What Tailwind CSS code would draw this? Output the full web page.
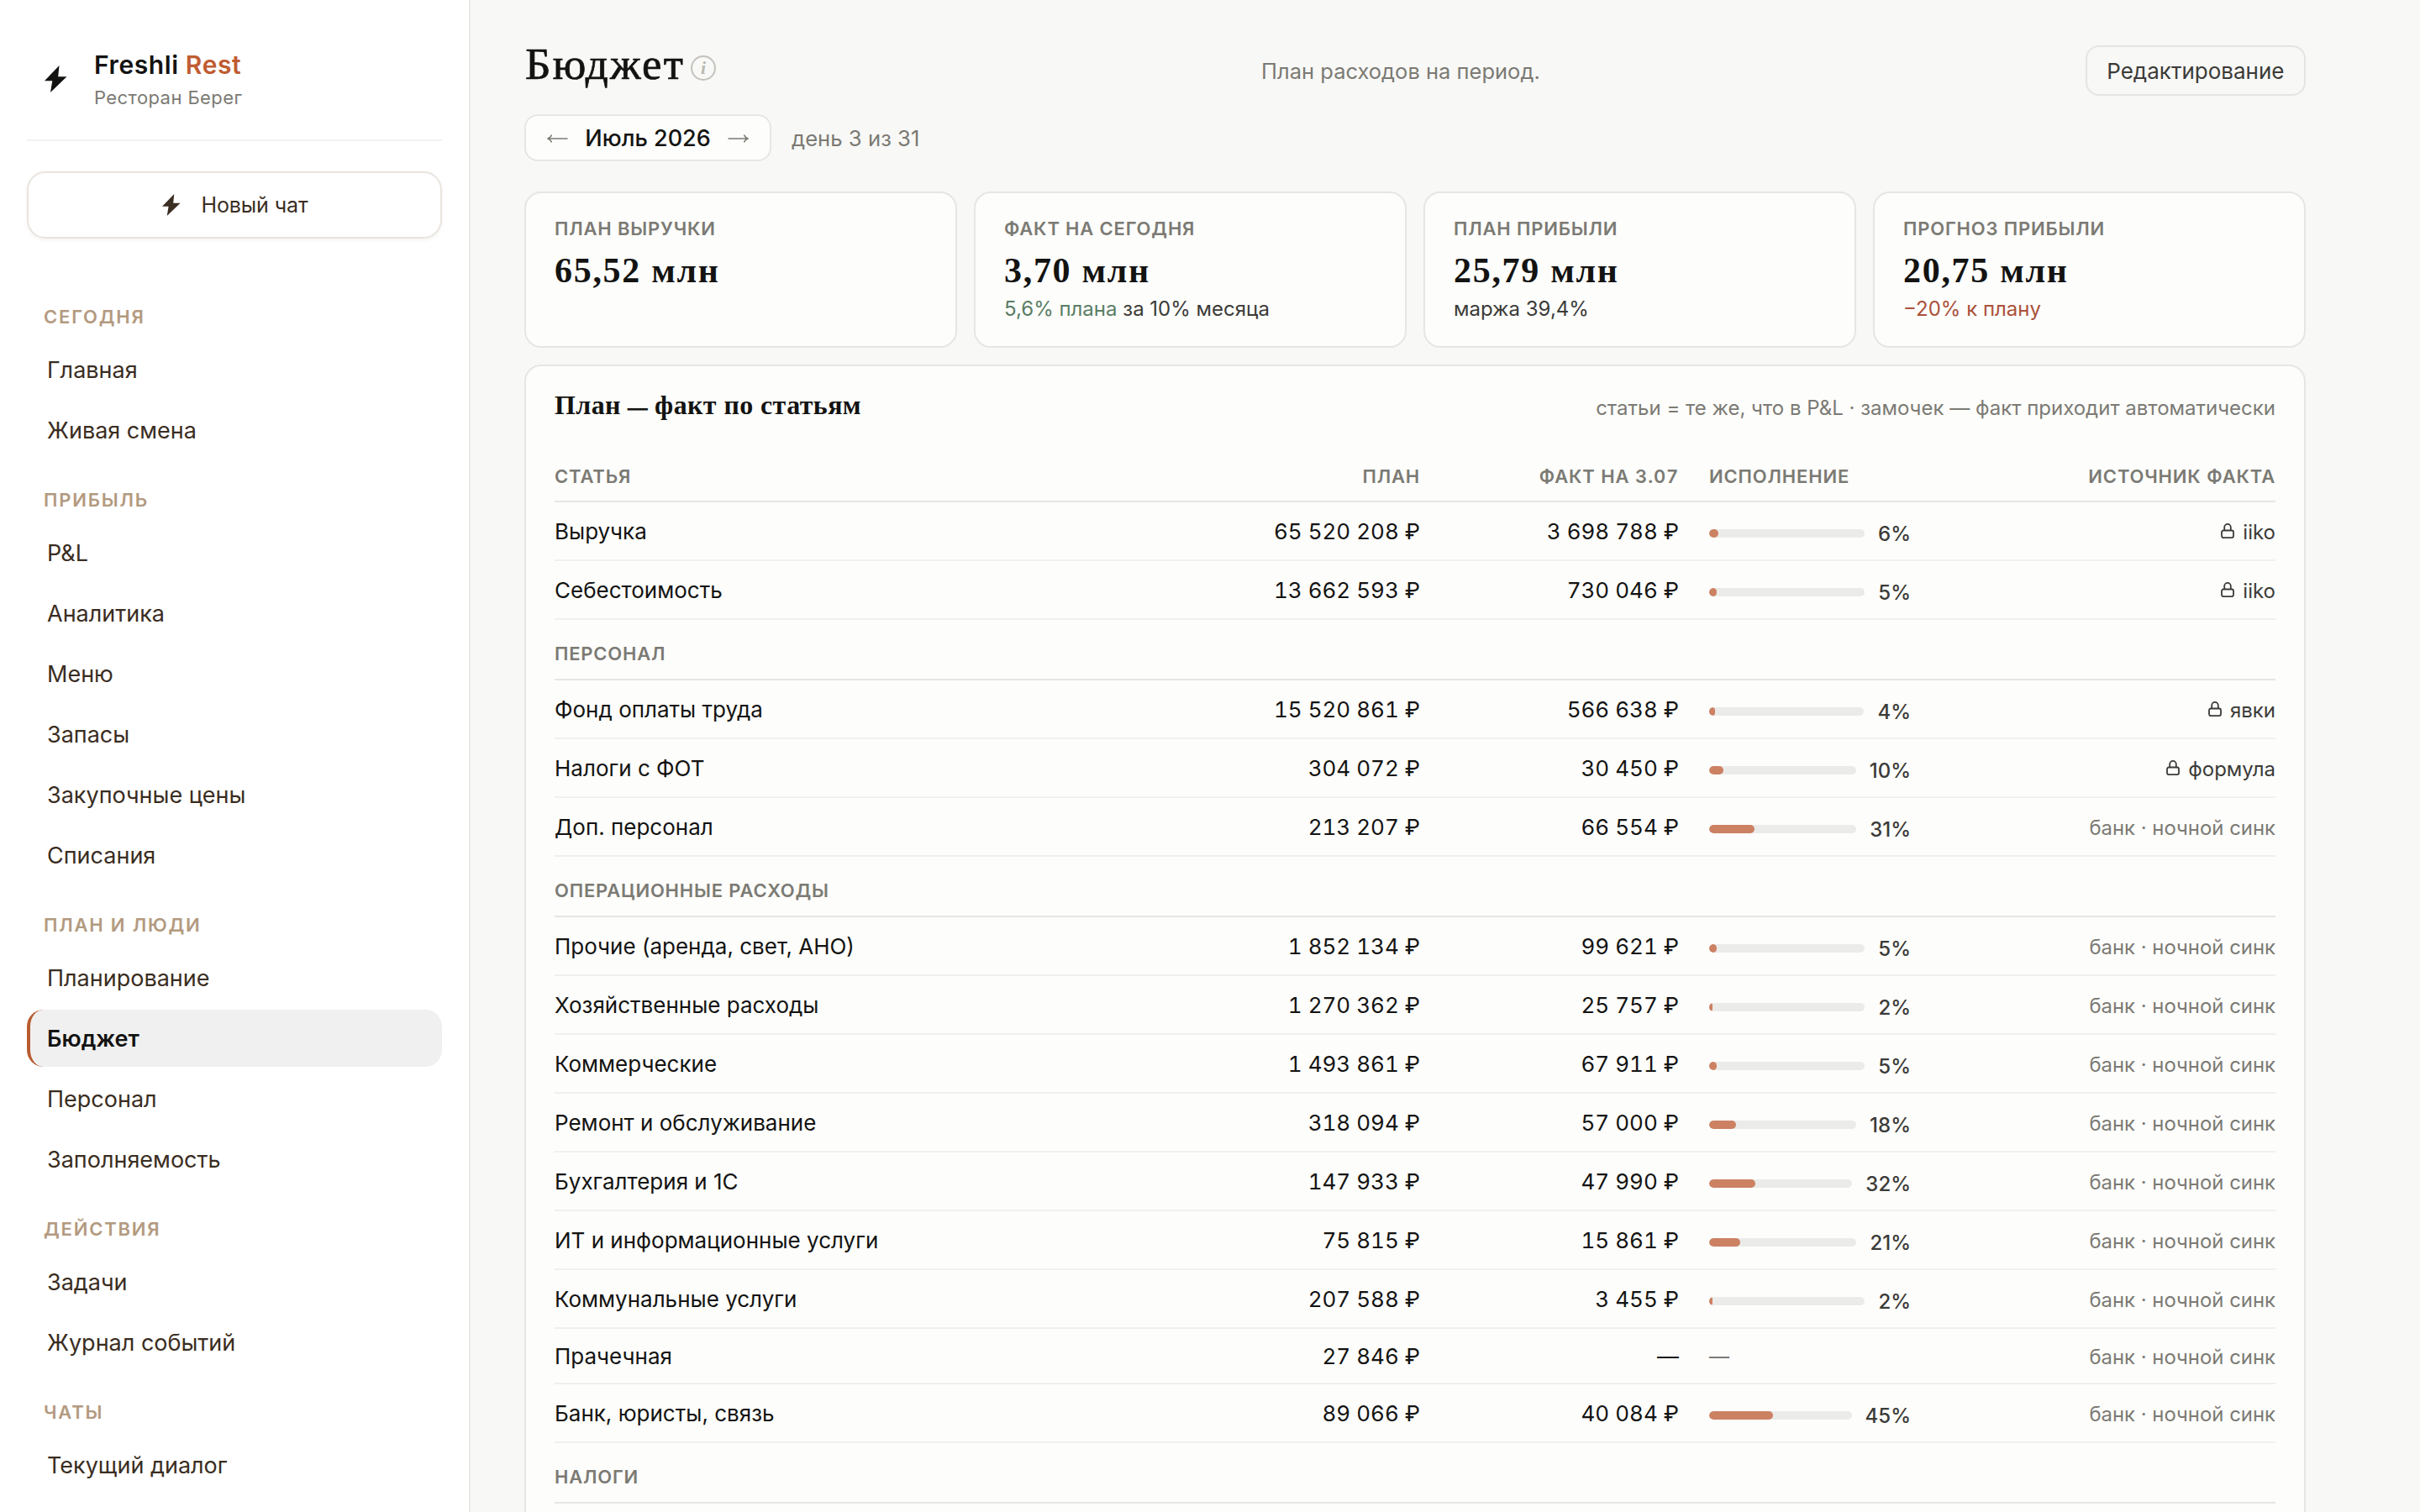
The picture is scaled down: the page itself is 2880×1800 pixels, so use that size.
<!DOCTYPE html>
<html lang="ru">
<head>
<meta charset="utf-8">
<title>Freshli Rest — Бюджет</title>
<script src="https://cdn.jsdelivr.net/npm/@tailwindcss/browser@4"></script>
</head>
<body class="bg-[#f8f8f6] font-['Inter',sans-serif] text-[#131312] antialiased">
<div class="flex h-[1800px] w-[2880px] overflow-hidden">
  <aside class="flex w-[560px] shrink-0 flex-col border-r-2 border-[#e9e9e8] bg-white px-8">
    <div class="flex h-[168px] shrink-0 items-center gap-8 border-b-2 border-[#f2f2f2] pt-[22px] pl-[21px]">
      <svg class="h-8 w-[27px]" viewBox="0 0 27 32" fill="#131312"><path d="M17.5 0 0 18.3h9.300L7 32 26.500 13.200H16.200z"/></svg>
      <div class="flex flex-col pt-[3px]">
        <div class="text-[30px] leading-[40px] font-semibold tracking-[0.6px]"><span>Freshli <span class="text-[#c05c32]">Rest</span></span></div>
        <div class="text-[22px] leading-[38px] tracking-[0.42px] text-[#7b7a74]"><span>Ресторан Берег</span></div>
      </div>
    </div>
    <button class="mt-9 flex h-20 shrink-0 items-center justify-center gap-6 rounded-[22px] border-2 border-[#e9e4de] pt-0.5 pl-0.5 text-[25px] tracking-[-0.1px] text-[#3a2d22] shadow-[0_2px_4px_rgba(60,40,20,0.05)]">
      <svg class="-mt-0.5 h-[26px] w-[22px]" viewBox="0 0 27 32" fill="#3a2d22"><path d="M17.5 0 0 18.3h9.300L7 32 26.500 13.200H16.200z"/></svg>
      <span>Новый чат</span>
    </button>
    <nav id="nav" class="mt-11 flex flex-col"></nav>
  </aside>
  <main class="flex flex-1 flex-col pt-[54px] pr-[136px] pl-16">
    <header class="flex h-[60px] shrink-0 items-center justify-between">
      <div class="flex items-center gap-[7px]">
        <h1 class="-mt-4 pl-px font-['Liberation_Serif',serif] text-[53px] leading-[60px] tracking-[2.2px] [-webkit-text-stroke:0.7px_#131312]"><span>Бюджет</span></h1>
        <span class="-mt-1.5 flex size-[30px] items-center justify-center rounded-full border-2 border-[#c3c2bc] font-['Liberation_Serif',serif] text-[22px] leading-none font-bold text-[#b9b8b1] italic">i</span>
      </div>
      <p class="mt-[3px] text-[25.5px] text-[#7b7a74]"><span>План расходов на период.</span></p>
      <button class="h-[60px] rounded-[16px] border-2 border-[#e4e4e2] px-[23.5px] pt-px text-[26px] text-[#3b3b38]"><span>Редактирование</span></button>
    </header>
    <div class="mt-[22px] flex h-14 shrink-0 items-center gap-6">
      <div class="flex h-14 w-[294px] items-center justify-between rounded-[16px] border-2 border-[#e6e6e4] bg-[#fdfdfb] px-6">
        <svg class="mt-0.5 h-4 w-[26px]" viewBox="0 0 26 16" fill="none" stroke="#7b7a74" stroke-width="1.500"><path d="M25.500 8H1.500M6.500 3.500C5.500 6 4 7.500 1.500 8 4 8.500 5.500 10 6.500 12.500"/></svg>
        <span class="mt-0.5 text-[27px] font-medium"><span>Июль 2026</span></span>
        <svg class="mt-0.5 h-4 w-[26px]" viewBox="0 0 26 16" fill="none" stroke="#7b7a74" stroke-width="1.500"><path d="M.5 8h24M19.500 3.500C20.500 6 22 7.500 24.500 8 22 8.500 20.500 10 19.500 12.500"/></svg>
      </div>
      <span class="mt-0.5 text-[25.7px] text-[#7b7a74]"><span>день 3 из 31</span></span>
    </div>
    <section id="cards" class="mt-9 grid h-[186px] shrink-0 grid-cols-4 gap-5"></section>
    <section class="mt-5 flex h-[1500px] shrink-0 flex-col rounded-[20px] border-2 border-[#e6e6e4] bg-[#fdfdfb] px-[34px]">
      <div class="flex h-[100px] items-center justify-between">
        <h2 class="-mt-1 font-['Liberation_Serif',serif] text-[32px] leading-[40px] font-bold tracking-[0.4px]"><span>План <span class="text-[23px] [-webkit-text-stroke:1px_#131312]">—</span> факт по статьям</span></h2>
        <p class="text-[24px] text-[#7b7a74]"><span>статьи = те же, что в P&amp;L · замочек — факт приходит автоматически</span></p>
      </div>
      <div class="grid h-[62px] grid-cols-[1030px_308px_36px_240px_1fr] items-center border-b-2 border-[#e6e6e4] pt-0.5 text-[22px] font-semibold tracking-[0.82px] text-[#7b7a74] tabular-nums">
        <div class="flex justify-between"><span>СТАТЬЯ</span><span>ПЛАН</span></div>
        <div class="text-right"><span>ФАКТ НА 3.07</span></div>
        <div></div>
        <div><span>ИСПОЛНЕНИЕ</span></div>
        <div class="text-right"><span>ИСТОЧНИК ФАКТА</span></div>
      </div>
      <div id="rows"></div>
    </section>
  </main>
</div>
<script>
const nav = [
  ['СЕГОДНЯ', ['Главная', 'Живая смена']],
  ['ПРИБЫЛЬ', ['P&amp;L', 'Аналитика', 'Меню', 'Запасы', 'Закупочные цены', 'Списания']],
  ['ПЛАН И ЛЮДИ', ['Планирование', 'Бюджет', 'Персонал', 'Заполняемость']],
  ['ДЕЙСТВИЯ', ['Задачи', 'Журнал событий']],
  ['ЧАТЫ', ['Текущий диалог']],
];
document.getElementById('nav').innerHTML = nav.map(([title, items]) => `
  <div class="flex h-[78px] items-center pt-5 pl-5 text-[22px] font-semibold tracking-[1.8px] text-[#b39a80]"><span>${title}</span></div>
  <div class="flex flex-col gap-1">${items.map(t => t === 'Бюджет'
    ? `<a class="flex h-[68px] items-center rounded-[20px] border-l-4 border-[#b85c30] bg-[#f0f0f0] pt-[3px] pl-5 text-[27px] font-semibold"><span>${t}</span></a>`
    : `<a class="flex h-[68px] items-center pt-[3px] pl-6 text-[27px] text-[#3a2d22]"><span>${t}</span></a>`).join('')}</div>`).join('');

const cards = [
  ['ПЛАН ВЫРУЧКИ', '65,52 млн', ''],
  ['ФАКТ НА СЕГОДНЯ', '3,70 млн', '<span class="text-[#5a7d65]">5,6% плана</span> за 10% месяца'],
  ['ПЛАН ПРИБЫЛИ', '25,79 млн', 'маржа 39,4%'],
  ['ПРОГНОЗ ПРИБЫЛИ', '20,75 млн', '<span class="text-[#ab503a]">−20% к плану</span>'],
];
document.getElementById('cards').innerHTML = cards.map(([l, v, s]) => `
  <div class="flex flex-col rounded-[20px] border-2 border-[#e6e6e4] bg-[#fdfdfb] px-[34px] pt-[28px]">
    <div class="text-[22px] leading-[28px] font-semibold tracking-[0.82px] text-[#7b7a74]"><span>${l}</span></div>
    <div class="mt-2 font-['Liberation_Serif',serif] text-[42px] leading-[56px] font-bold tracking-[1.7px]"><span>${v}</span></div>
    <div class="mt-0.5 text-[24px] leading-[32px] text-[#3b3b38]"><span>${s}</span></div>
  </div>`).join('');

const bank = 'банк · ночной синк';
const rows = [
  ['Выручка', '65 520 208', '3 698 788', 6, 'iiko'],
  ['Себестоимость', '13 662 593', '730 046', 5, 'iiko'],
  ['ПЕРСОНАЛ'],
  ['Фонд оплаты труда', '15 520 861', '566 638', 4, 'явки'],
  ['Налоги с ФОТ', '304 072', '30 450', 10, 'формула'],
  ['Доп. персонал', '213 207', '66 554', 31, bank],
  ['ОПЕРАЦИОННЫЕ РАСХОДЫ'],
  ['Прочие (аренда, свет, АНО)', '1 852 134', '99 621', 5, bank],
  ['Хозяйственные расходы', '1 270 362', '25 757', 2, bank],
  ['Коммерческие', '1 493 861', '67 911', 5, bank],
  ['Ремонт и обслуживание', '318 094', '57 000', 18, bank],
  ['Бухгалтерия и 1С', '147 933', '47 990', 32, bank],
  ['ИТ и информационные услуги', '75 815', '15 861', 21, bank],
  ['Коммунальные услуги', '207 588', '3 455', 2, bank],
  ['Прачечная', '27 846', null, null, bank],
  ['Банк, юристы, связь', '89 066', '40 084', 45, bank],
  ['НАЛОГИ'],
];
const lock = '<svg class="-mt-[3px] h-[18px] w-4" viewBox="0 0 16 18" fill="none" stroke="#3b3b38" stroke-width="1.800"><rect x="1" y="8.500" width="14" height="8.600" rx="2"/><path d="M4.200 8.500V4.700a3.800 3.800 0 0 1 7.600 0v3.800"/></svg>';
document.getElementById('rows').innerHTML = rows.map(r => {
  if (r.length === 1) return `<div class="flex h-[72px] items-center border-b-2 border-[#e6e6e4] pt-[10px] text-[22px] font-semibold tracking-[0.8px] text-[#7b7a74]"><span>${r[0]}</span></div>`;
  const [name, plan, fact, pct, src] = r;
  const bar = pct === null
    ? '<div class="pt-0.5 text-[24px] text-[#7b7a74]">—</div>'
    : `<div class="flex items-center gap-4 pt-1.5"><div class="h-[10px] flex-1 overflow-hidden rounded-full bg-[#ebebe9]"><div class="h-full rounded-full bg-[#cc8163]" style="width:${pct}%"></div></div><span class="pt-0.5 text-[24px] leading-[30px] font-medium text-[#3b3b38]">${pct}%</span></div>`;
  const source = src === bank
    ? `<div class="pt-[3px] text-right text-[23.9px] text-[#7b7a74]"><span>${src}</span></div>`
    : `<div class="flex items-center justify-end gap-2.5 pt-[3px] text-[24px] text-[#3b3b38]">${lock}<span>${src}</span></div>`;
  return `<div class="${pct === null ? 'h-[66px]' : 'h-[70px]'} grid grid-cols-[1030px_308px_36px_240px_1fr] items-center border-b-2 border-[#f0f0ee] text-[26px]">
    <div class="flex justify-between"><span>${name}</span><span class="tabular-nums">${plan} ₽</span></div>
    <div class="text-right tabular-nums"><span>${fact ? fact + ' ₽' : '—'}</span></div><div></div>${bar}${source}</div>`;
}).join('');
</script>
</body>
</html>
